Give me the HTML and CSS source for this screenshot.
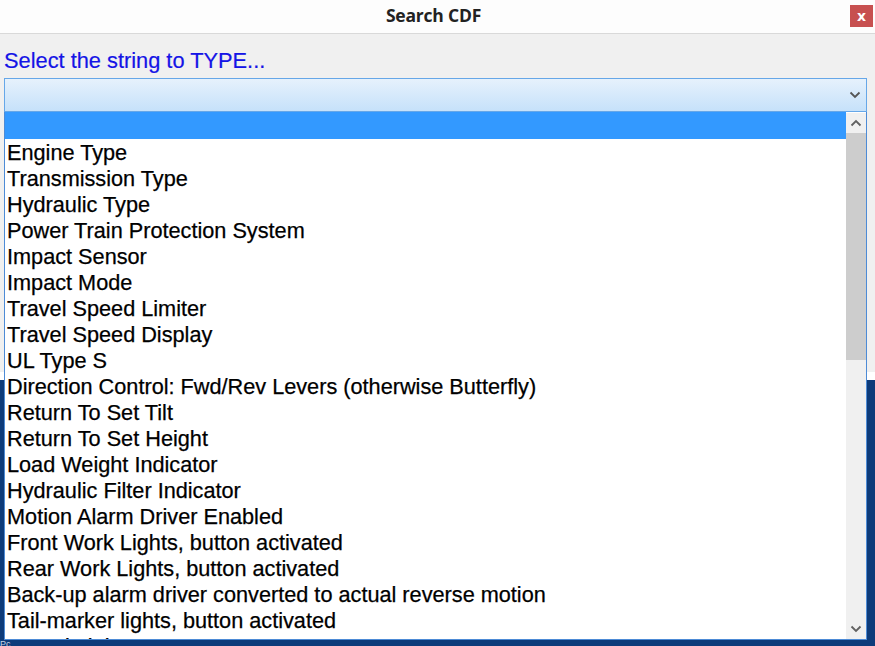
FILE: index.html
```html
<!DOCTYPE html>
<html>
<head>
<meta charset="utf-8">
<link rel="stylesheet" href="styles.css">
</head>
<body>
<div class="window">
  <div class="titlebar">
    <div class="title">Search CDF</div>
    <div class="close">x</div>
  </div>
  <div class="content">
    <div class="label">Select the string to TYPE...</div>
    <div class="combo">
      <svg class="chev" width="12" height="8" viewBox="0 0 12 8"><path d="M1.5 1.5 L6 6 L10.5 1.5" fill="none" stroke="#555" stroke-width="1.8"/></svg>
    </div>
    <div class="gap"></div>
    <div class="strip"></div>
    <div class="navy"><span class="pc">Pc</span></div>
  </div>
  <div class="dropdown">
    <div class="items">
      <div class="item sel">&nbsp;</div>
      <div class="item">Engine Type</div>
      <div class="item">Transmission Type</div>
      <div class="item">Hydraulic Type</div>
      <div class="item">Power Train Protection System</div>
      <div class="item">Impact Sensor</div>
      <div class="item">Impact Mode</div>
      <div class="item">Travel Speed Limiter</div>
      <div class="item">Travel Speed Display</div>
      <div class="item">UL Type S</div>
      <div class="item">Direction Control: Fwd/Rev Levers (otherwise Butterfly)</div>
      <div class="item">Return To Set Tilt</div>
      <div class="item">Return To Set Height</div>
      <div class="item">Load Weight Indicator</div>
      <div class="item">Hydraulic Filter Indicator</div>
      <div class="item">Motion Alarm Driver Enabled</div>
      <div class="item">Front Work Lights, button activated</div>
      <div class="item">Rear Work Lights, button activated</div>
      <div class="item">Back-up alarm driver converted to actual reverse motion</div>
      <div class="item">Tail-marker lights, button activated</div>
      <div class="item">Speed Lights</div>
    </div>
    <div class="scrollbar">
      <div class="sbtn"><svg width="12" height="8" viewBox="0 0 12 8"><path d="M1.5 6.5 L6 2 L10.5 6.5" fill="none" stroke="#606060" stroke-width="1.8"/></svg></div>
      <div class="thumb"></div>
      <div class="track"></div>
      <div class="sbtn"><svg width="12" height="8" viewBox="0 0 12 8"><path d="M1.5 1.5 L6 6 L10.5 1.5" fill="none" stroke="#606060" stroke-width="1.8"/></svg></div>
    </div>
  </div>
</div>
</body>
</html>
```
FILE: styles.css
```css
* { box-sizing: border-box; }
html, body { margin: 0; padding: 0; }
body { width: 875px; height: 646px; overflow: hidden; background: #f0f0f0; }
.window { position: relative; width: 875px; height: 646px; display: flex; flex-direction: column; }
.titlebar {
  height: 34px; background: #fdfdfd; border-bottom: 1px solid #d9d9d9;
  display: flex; align-items: center; justify-content: center; position: relative;
}
.title { font-family: "Open Sans", sans-serif; font-weight: 700; font-size: 17.5px; color: #222; margin-left: -8px; margin-top: -3px; letter-spacing: -0.2px; }
.close {
  position: absolute; right: 2px; top: 5px; width: 23px; height: 22px;
  background: #c75050; color: #fff; font-family: "DejaVu Sans", sans-serif; font-weight: bold;
  font-size: 14px; display: flex; align-items: center; justify-content: center; line-height: 1;
}
.content { flex: 1; display: flex; flex-direction: column; }
.label {
  font-family: "Liberation Sans", Arial, sans-serif; font-size: 21.8px; color: #1414e6;
  padding: 14px 0 0 4px; height: 44px; line-height: 26px; -webkit-text-stroke: 0.2px #1414e6;
}
.combo {
  margin-left: 4px; width: 863px; height: 34px; border: 1px solid #66a7e8;
  background: linear-gradient(#e6f1fc, #c6e1fa);
  display: flex; align-items: center; justify-content: flex-end; padding-right: 5px;
}
.gap { flex: none; height: 260px; }
.strip { height: 8px; background: #ffffff; }
.navy { flex: 1; background: #0d3b7a; position: relative; }
.pc { position: absolute; left: 0; bottom: -3px; font-family: "Liberation Sans", sans-serif; font-size: 9px; color: #c8d4e4; }
.dropdown {
  position: absolute; left: 4px; top: 112px; width: 863px; height: 528px;
  background: #fff; border: 1px solid #4d8bd6; border-top: none;
  display: flex; overflow: hidden;
}
.items { flex: 1; overflow: hidden; }
.item {
  height: 26px; line-height: 26px; padding: 1px 0 0 2px;
  font-family: "Liberation Sans", Arial, sans-serif; font-size: 21.7px; color: #000; white-space: nowrap;
  -webkit-text-stroke: 0.25px #000;
}
.item.sel { background: #3399ff; height: 27px; }
.scrollbar { width: 20px; background: #f0f0f0; display: flex; flex-direction: column; margin-top: 1px; }
.sbtn { height: 20px; display: flex; align-items: center; justify-content: center; }
.thumb { height: 227px; background: #cdcdcd; }
.track { flex: 1; }
```
